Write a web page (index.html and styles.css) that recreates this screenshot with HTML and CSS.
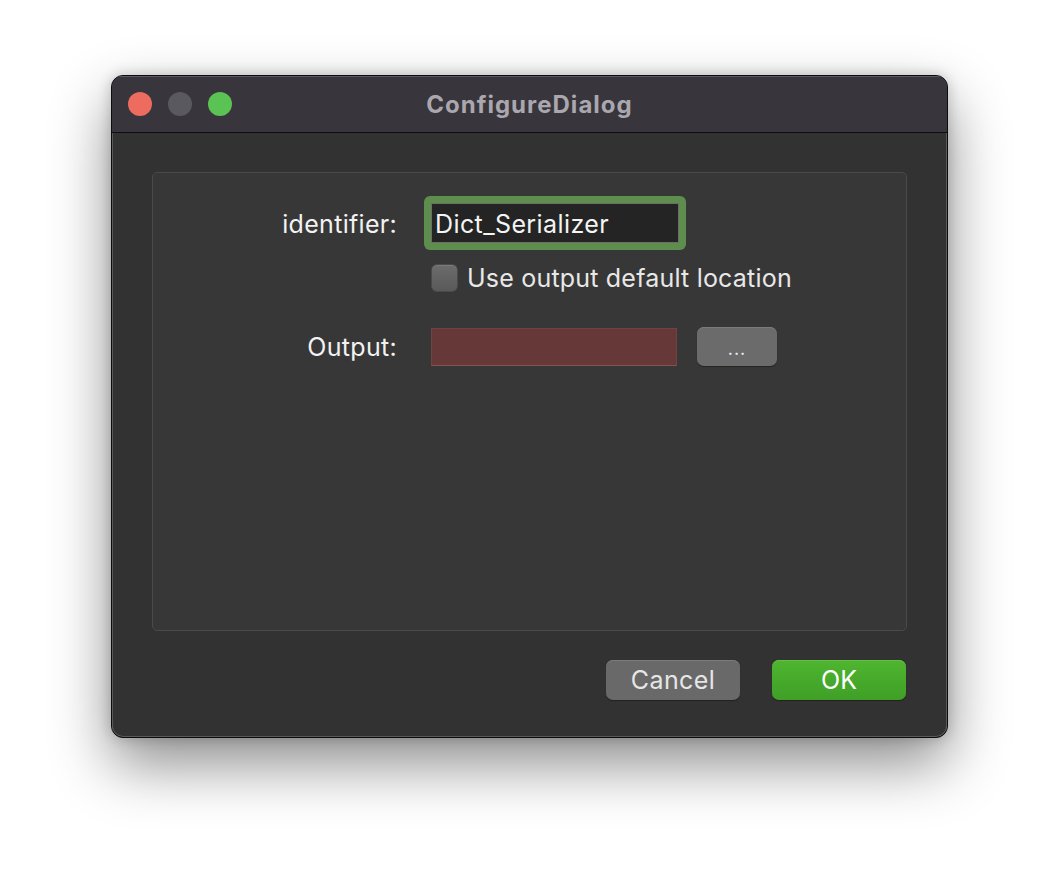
FILE: index.html
```html
<!DOCTYPE html>
<html>
<head>
<meta charset="utf-8">
<link rel="stylesheet" href="styles.css">
</head>
<body>
<div class="window">
  <div class="titlebar">
    <div class="lights">
      <span class="light red"></span>
      <span class="light gray"></span>
      <span class="light green"></span>
    </div>
    <div class="title">ConfigureDialog</div>
  </div>
  <div class="content">
    <div class="group">
      <div class="row row-id">
        <div class="label">identifier:</div>
        <div class="field-ring"><div class="field">Dict_Serializer</div></div>
      </div>
      <div class="row row-check">
        <div class="label"></div>
        <label class="check"><span class="box"></span><span class="check-text">Use output default location</span></label>
      </div>
      <div class="row row-out">
        <div class="label">Output:</div>
        <div class="out-field"></div>
        <button class="btn browse">...</button>
      </div>
    </div>
    <div class="buttons">
      <button class="btn cancel">Cancel</button>
      <button class="btn ok">OK</button>
    </div>
  </div>
</div>
</body>
</html>
```

FILE: styles.css
```css
html, body {
  margin: 0;
  padding: 0;
  background: #ffffff;
}
body {
  width: 1060px;
  height: 886px;
  padding: 75px 0 0 111px;
  box-sizing: border-box;
  font-family: Inter, "Noto Sans", "Liberation Sans", sans-serif;
}
.window {
  width: 837px;
  height: 663px;
  box-sizing: border-box;
  border: 1px solid #0c0c0c;
  border-radius: 12px;
  background: #323232;
  box-shadow: inset 0 0 0 1px #5a5a5a, 0 26px 60px rgba(0,0,0,0.45), 0 0 14px rgba(0,0,0,0.2);
  display: flex;
  flex-direction: column;
  overflow: hidden;
}
.titlebar {
  height: 56px;
  flex: none;
  background: #38353c;
  border-bottom: 1px solid #0e0e0e;
  display: flex;
  align-items: center;
  position: relative;
  box-shadow: inset 0 1px 0 #5c5a60;
}
.lights {
  display: flex;
  gap: 16px;
  padding-left: 16px;
}
.light {
  width: 24px;
  height: 24px;
  border-radius: 50%;
  display: block;
}
.light.red { background: #ed6b5f; }
.light.gray { background: #5b5960; }
.light.green { background: #5ac353; }
.title {
  position: absolute;
  left: 0;
  right: 0;
  top: 0;
  bottom: 0;
  display: flex;
  align-items: center;
  justify-content: center;
  font-weight: 700;
  font-size: 24px;
  color: #aaa7ae;
  letter-spacing: 1px;
  padding-top: 1px;
}
.content {
  flex: 1;
  display: flex;
  flex-direction: column;
  padding: 39px 40px 38px 40px;
  box-shadow: inset 1px 0 0 #5a5a5a, inset -1px 0 0 #5a5a5a, inset 0 -1px 0 #5a5a5a;
}
.group {
  height: 459px;
  box-sizing: border-box;
  border: 1px solid #4a4a4a;
  border-radius: 5px;
  background: #373737;
  padding-top: 23px;
}
.row {
  display: flex;
  align-items: center;
}
.label {
  width: 244px;
  flex: none;
  text-align: right;
  color: #f2f2f2;
  font-size: 25px;
  letter-spacing: 0.3px;
  box-sizing: border-box;
}
.row-id .label {
  padding-top: 2px;
}
.field-ring {
  margin-left: 27px;
  width: 262px;
  height: 54px;
  box-sizing: border-box;
  border-radius: 6px;
  background: #5e8e4d;
  padding: 7px;
}
.field {
  height: 40px;
  box-sizing: border-box;
  border: 1px solid #6c6c6c;
  background: #242424;
  color: #f4f4f4;
  font-size: 25px;
  letter-spacing: 0.4px;
  line-height: 40px;
  padding-left: 3px;
  white-space: nowrap;
}
.row-check {
  margin-top: 13px;
}
.check {
  display: flex;
  align-items: center;
  margin-left: 34px;
  gap: 9px;
}
.box {
  width: 27px;
  height: 28px;
  box-sizing: border-box;
  border-radius: 6px;
  background: linear-gradient(#6c6c6c, #595959);
  border: 1px solid #4a4a4a;
  box-shadow: inset 0 1px 0 #7a7a7a;
}
.check-text {
  color: #e8e8e8;
  font-size: 25px;
  letter-spacing: 0.2px;
}
.row-out {
  margin-top: 34px;
}
.out-field {
  margin-left: 34px;
  width: 246px;
  height: 38px;
  box-sizing: border-box;
  background: #663838;
  border: 1px solid #6f4343;
  border-bottom-color: #815353;
}
.btn {
  font-family: Inter, "Noto Sans", "Liberation Sans", sans-serif;
  border: none;
  border-radius: 7px;
  color: #ececec;
  font-size: 25px;
  padding: 0;
  cursor: default;
}
.browse {
  margin-left: 20px;
  width: 80px;
  height: 39px;
  background: #6b6b6b;
  box-shadow: inset 0 1px 0 #7b7b7b, 0 1px 1px rgba(0,0,0,0.35);
  font-size: 18px;
  line-height: 34px;
  letter-spacing: 1px;
  padding-top: 4px;
}
.buttons {
  margin-top: 29px;
  margin-right: 1px;
  display: flex;
  justify-content: flex-end;
  gap: 32px;
}
.cancel {
  width: 134px;
  height: 40px;
  background: #696969;
  box-shadow: inset 0 1px 0 #7a7a7a, 0 1px 1px rgba(0,0,0,0.35);
  color: #e6e6e6;
  letter-spacing: 0.4px;
}
.ok {
  width: 134px;
  height: 40px;
  background: linear-gradient(#4fb52f, #3f9f27);
  box-shadow: inset 0 1px 0 #62c046, 0 1px 1px rgba(0,0,0,0.35);
  color: #ffffff;
}
```
